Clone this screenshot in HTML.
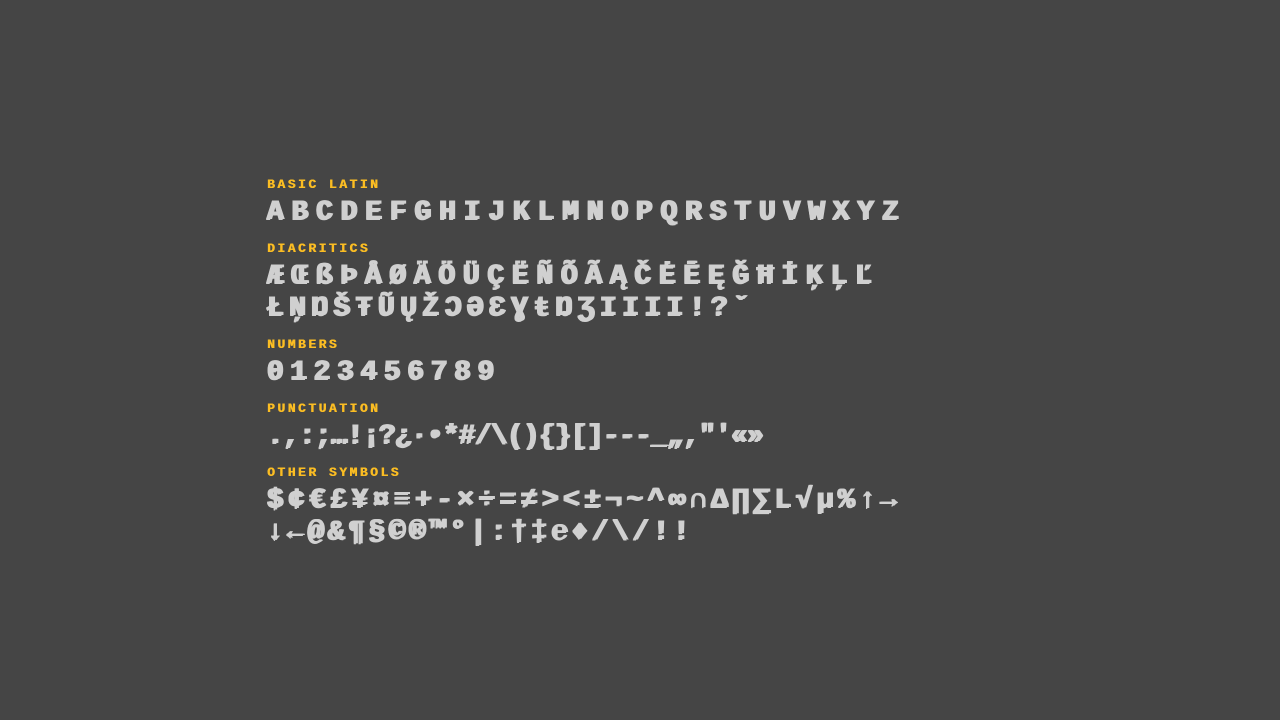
<!DOCTYPE html>
<html><head><meta charset="utf-8"><style>
html,body{margin:0;padding:0;background:#454545;width:1280px;height:720px;overflow:hidden}
.l{position:absolute;left:267px;font:bold 13px/13px "Liberation Mono",monospace;color:#fbbd23;letter-spacing:2.5px;white-space:nowrap;text-shadow:0.5px 0 0 #fbbd23}
.t{position:absolute;left:266px;font:bold 28px/28px "Liberation Mono","DejaVu Sans Mono",monospace;color:#d0d0d0;letter-spacing:7.8px;white-space:nowrap;text-shadow:1px 0 0 #d0d0d0,2px 0 0 #d0d0d0,0 1px 0 #d0d0d0}
</style></head><body>
<div class="l" style="top:178px">BASIC LATIN</div>
<div class="t" style="top:199px">ABCDEFGHIJKLMNOPQRSTUVWXYZ</div>
<div class="l" style="top:242px">DIACRITICS</div>
<div class="t" style="top:263px;letter-spacing:7.7px">ÆŒßÞÅØÄÖÜÇËÑÕÃĄČĖĒĘĞĦİĶĻĽ</div>
<div class="t" style="top:295px;letter-spacing:5.4px">ŁŅŊŠŦŨŲŽƆƏƐƔŧŊƷIIII!?ˇ</div>
<div class="l" style="top:338px">NUMBERS</div>
<div class="t" style="top:359px;letter-spacing:6.6px">0123456789</div>
<div class="l" style="top:402px">PUNCTUATION</div>
<div class="t" style="top:423px;letter-spacing:-0.8px">.,:;…!¡?¿·•*#/\(){}[]---_„,"'«»</div>
<div class="l" style="top:466px">OTHER SYMBOLS</div>
<div class="t" style="top:487px;letter-spacing:4.35px">$¢€£¥¤≡+-×÷=≠&gt;&lt;±¬~^∞∩∆∏∑L√µ%↑→</div>
<div class="t" style="top:519px;letter-spacing:3.5px">↓←@&amp;¶§©®™°|:†‡℮♦/\/!!</div>
</body></html>
